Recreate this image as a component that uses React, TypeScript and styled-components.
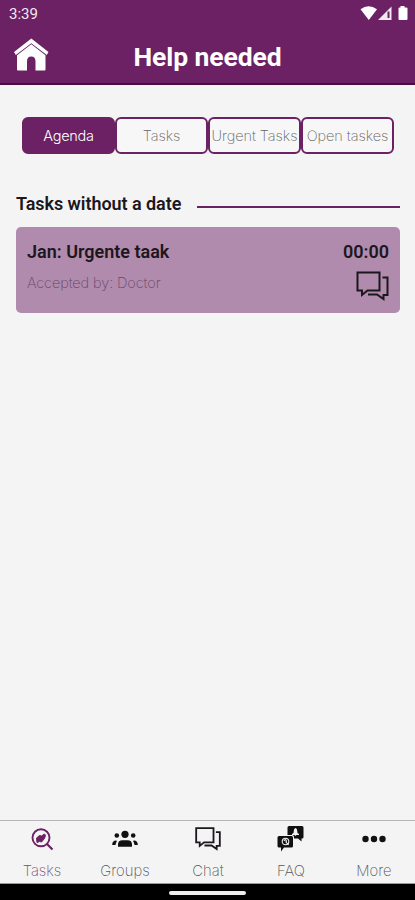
import React from 'react';
import styled, { createGlobalStyle } from 'styled-components';

const PURPLE = '#6b2163';
const INK = '#1c171d';

const Global = createGlobalStyle`
  *, *::before, *::after { box-sizing: border-box; }
  body { margin: 0; background: #f4f4f4; font-family: Roboto, "Liberation Sans", sans-serif; }
  svg { display: block; flex: none; }
`;

const Screen = styled.div`
  width: 415px;
  height: 900px;
  display: flex;
  flex-direction: column;
  overflow: hidden;
  background: #f4f4f4;
`;

const Header = styled.header`
  height: 85px;
  background: ${PURPLE};
  border-bottom: 2px solid #4b0c46;
  color: #fff;
`;

const StatusBar = styled.div`
  height: 28px;
  padding: 0 7px 0 9px;
  display: flex;
  align-items: center;
  justify-content: space-between;
  font-size: 15px;
  line-height: 28px;
`;

const Clock = styled.span`
  color: #f3e8f2;
`;

const TitleBar = styled.div`
  height: 56px;
  display: grid;
  grid-template-columns: 62px 1fr 62px;
  align-items: center;
`;

const HomeButton = styled.button`
  display: flex;
  border: 0;
  padding: 0 0 4px 14px;
  background: none;
  color: inherit;
`;

const Title = styled.h1`
  margin: 0;
  text-align: center;
  font-size: 26.5px;
  line-height: 58px;
  font-weight: 700;
  letter-spacing: -0.1px;
`;

const Main = styled.main`
  flex: 1;
  padding: 32px 15px 0 16px;
`;

const Tabs = styled.div`
  display: grid;
  grid-template-columns: repeat(4, 1fr);
  margin: 0 6px;
  height: 37px;
`;

const Tab = styled.button<{ $active?: boolean }>`
  border: 2px solid ${PURPLE};
  border-radius: 6px;
  padding: 0;
  background: ${({ $active }) => ($active ? PURPLE : '#f7f7f7')};
  color: ${({ $active }) => ($active ? '#fff' : '#666')};
  font-family: Inter, sans-serif;
  font-size: 14.5px;
  font-weight: ${({ $active }) => ($active ? 300 : 200)};
  letter-spacing: ${({ $active }) => ($active ? -0.3 : -0.05)}px;
  white-space: nowrap;
`;

const SectionHeading = styled.div`
  display: flex;
  align-items: center;
  gap: 16px;
  margin-top: 38px;
  height: 24px;
`;

const SectionTitle = styled.h2`
  margin: 0;
  color: ${INK};
  font-size: 18px;
  line-height: 24px;
  font-weight: 600;
  letter-spacing: -0.06px;
  white-space: nowrap;
`;

const Rule = styled.div`
  flex: 1;
  height: 2px;
  margin-top: 5px;
  background: ${PURPLE};
`;

const Card = styled.article`
  display: flex;
  justify-content: space-between;
  height: 86px;
  margin-top: 11px;
  padding: 12px 11px 0 11px;
  border-radius: 5px;
  background: #b18bad;
`;

const CardColumn = styled.div<{ $end?: boolean }>`
  display: flex;
  flex-direction: column;
  align-items: ${({ $end }) => ($end ? 'flex-end' : 'flex-start')};
  gap: ${({ $end }) => ($end ? 6 : 7)}px;
`;

const CardStrong = styled.div`
  color: ${INK};
  font-size: 18px;
  line-height: 26px;
  font-weight: 600;
`;

const CardNote = styled.div`
  color: #66486a;
  font-family: Inter, sans-serif;
  font-size: 14.5px;
  line-height: 22px;
  font-weight: 200;
  letter-spacing: -0.1px;
`;

const Nav = styled.nav`
  height: 64px;
  display: grid;
  grid-template-columns: repeat(5, 1fr);
  border-top: 1px solid #b5b5b5;
  border-bottom: 1px solid #999;
`;

const NavItem = styled.button<{ $active?: boolean }>`
  display: flex;
  flex-direction: column;
  align-items: center;
  justify-content: flex-start;
  border: 0;
  padding: 4px 0 0;
  background: none;
  color: ${({ $active }) => ($active ? PURPLE : '#111')};
`;

const NavLabel = styled.span<{ $active?: boolean }>`
  margin-top: 8px;
  padding-left: 1px;
  color: ${({ $active }) => ($active ? '#765074' : '#555')};
  font-family: Inter, sans-serif;
  font-size: 14.8px;
  line-height: 20px;
  font-weight: 200;
`;

const SystemBar = styled.div`
  height: 16px;
  display: flex;
  justify-content: center;
  padding-top: 7px;
  background: #000;
`;

const HomeIndicator = styled.div`
  width: 77px;
  height: 4px;
  border-radius: 2px;
  background: #eee;
`;

const StatusIcons = () => (
  <svg width="48" height="18" viewBox="360 5 48 18" fill="#fff">
    <path d="M360.500 9.200Q368.500 3.500 377 9.200L368.800 20Z" />
    <path d="M391.500 6.500V20H378Z" opacity=".9" />
    <path d="M387.500 11.500h2V18h-2z" fill={PURPLE} />
    <path d="M400.500 6h4v1.500h2q1 0 1 1V19q0 1-1 1h-7q-1 0-1-1V8.500q0-1 1-1h1z" />
  </svg>
);

const HomeIcon = () => (
  <svg width="36" height="34" viewBox="0 0 36 34" fill="currentColor">
    <path d="M0 14 17.300 0.500 34.500 14 32.800 17 17.300 5.200 1.800 17Z" />
    <path d="M3 17.300 17.300 6.200 31.500 17.300V31.500q0 1-1 1H21.500V23.500Q21.500 18.500 17.300 18.500Q13 18.500 13 23.500V32.500H4Q3 32.500 3 31.500Z" />
  </svg>
);

const ChatIcon = ({ size, stroke = 2 }: { size: number; stroke?: number }) => (
  <svg width={size} height={size * 0.91} viewBox="0 0 33 30" fill="none" stroke={INK} strokeWidth={stroke}>
    <path d="M1.500 1.500H23.500V19.500H11.500L6 24V19.500H1.500Z" />
    <path d="M26.500 6.500H31.500V24H27.500V28L21 23.500H12" />
  </svg>
);

const SearchTaskIcon = () => (
  <svg width="24" height="28" viewBox="0 0 24 28" fill="none" stroke="currentColor">
    <circle cx="11" cy="12.800" r="8.500" strokeWidth="1.900" />
    <path d="m17 19 5.500 5.500" strokeWidth="2.200" />
    <path d="m6.500 13 3-2.500 2 .5 3-2 1 1.500-1 3-3 3.500-2-.5-2.500 1z" fill="currentColor" strokeWidth="1" />
  </svg>
);

const GroupIcon = () => (
  <svg width="28" height="28" viewBox="0 0 28 28" fill="currentColor">
    <circle cx="14" cy="9.300" r="3.600" />
    <circle cx="5.800" cy="10.500" r="2.300" />
    <circle cx="22.200" cy="10.500" r="2.300" />
    <path d="M7 21.800V19.500Q7 15.200 11.500 15.200H16.500Q21 15.200 21 19.500V21.800Z" />
    <path d="M1.200 20Q1.200 15.500 5 15.500L6 16Q4.800 17.500 4.500 20ZM26.800 20Q26.800 15.500 23 15.500L22 16Q23.200 17.500 23.500 20Z" />
  </svg>
);

const FaqIcon = () => (
  <svg width="28" height="28" viewBox="0 0 28 28" fill="currentColor">
    <path d="M12 1H25q1.500 0 1.500 1.500V12q0 1.500-1.500 1.500h-.500V16.500L21 13.500H17V12q0-2-2-2h-4.500V2.500Q10.500 1 12 1Z" />
    <path d="M2 11H14.500q1.500 0 1.500 1.500v8.500Q16 22.500 14.500 22.500H7l-3 4V22.500H2Q.5 22.500 .5 21v-8.500Q.5 11 2 11Z" />
    <path d="M15 10v-1l1.500-1 .5-3.500q1.500-3 3 0l.5 3.500 1.500 1v1h-2.500l-1 1-1-1z" fill="#f4f4f4" />
    <g fill="none" stroke="#f4f4f4" strokeWidth="1.100">
      <circle cx="8.500" cy="16.500" r="3.300" />
      <path d="M7 16q1-2 2-1t0 2l2.500 3" />
    </g>
  </svg>
);

const MoreIcon = () => (
  <svg width="28" height="28" viewBox="0 0 28 28" fill="currentColor">
    <circle cx="5.500" cy="14" r="3.200" />
    <circle cx="14" cy="14" r="3.200" />
    <circle cx="22.500" cy="14" r="3.200" />
  </svg>
);

const NavChat = styled.div`
  height: 28px;
  padding-top: 2px;
`;

export default function App() {
  return (
    <Screen>
      <Global />
      <Header>
        <StatusBar>
          <Clock>3:39</Clock>
          <StatusIcons />
        </StatusBar>
        <TitleBar>
          <HomeButton aria-label="Home"><HomeIcon /></HomeButton>
          <Title>Help needed</Title>
        </TitleBar>
      </Header>
      <Main>
        <Tabs>
          <Tab $active>Agenda</Tab>
          <Tab>Tasks</Tab>
          <Tab>Urgent Tasks</Tab>
          <Tab>Open taskes</Tab>
        </Tabs>
        <SectionHeading>
          <SectionTitle>Tasks without a date</SectionTitle>
          <Rule />
        </SectionHeading>
        <Card>
          <CardColumn>
            <CardStrong>Jan: Urgente taak</CardStrong>
            <CardNote>Accepted by: Doctor</CardNote>
          </CardColumn>
          <CardColumn $end>
            <CardStrong>00:00</CardStrong>
            <ChatIcon size={33} />
          </CardColumn>
        </Card>
      </Main>
      <Nav>
        <NavItem $active><SearchTaskIcon /><NavLabel $active>Tasks</NavLabel></NavItem>
        <NavItem><GroupIcon /><NavLabel>Groups</NavLabel></NavItem>
        <NavItem><NavChat><ChatIcon size={26} stroke={2.3} /></NavChat><NavLabel>Chat</NavLabel></NavItem>
        <NavItem><FaqIcon /><NavLabel>FAQ</NavLabel></NavItem>
        <NavItem><MoreIcon /><NavLabel>More</NavLabel></NavItem>
      </Nav>
      <SystemBar><HomeIndicator /></SystemBar>
    </Screen>
  );
}
